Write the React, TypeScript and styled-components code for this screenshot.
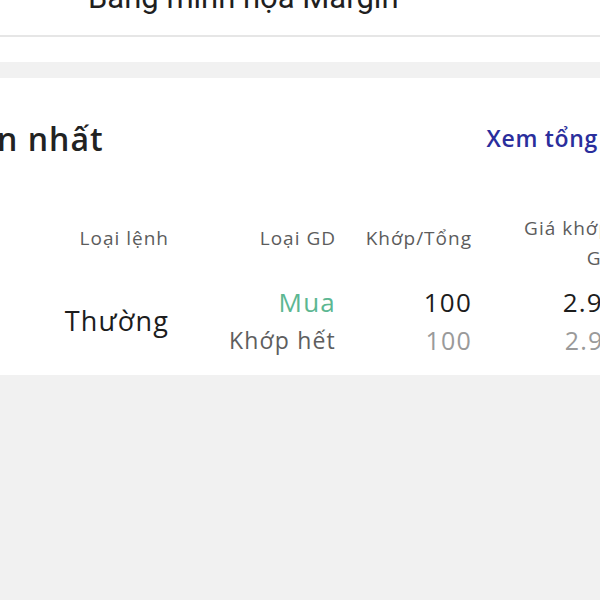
import React from 'react';
import styled, { createGlobalStyle } from 'styled-components';

const GlobalStyle = createGlobalStyle`
  *, *::before, *::after {
    box-sizing: border-box;
  }
  html, body {
    margin: 0;
    padding: 0;
    background: #f1f1f1;
    font-family: "Open Sans", "Noto Sans", sans-serif;
  }
  #root {
    width: 600px;
    height: 600px;
    overflow: hidden;
  }
`;

const Screen = styled.div`
  width: 600px;
  height: 600px;
  display: flex;
  flex-direction: column;
  background: #f1f1f1;
  overflow: hidden;
`;

const TopBar = styled.div`
  height: 37px;
  flex-shrink: 0;
  display: flex;
  align-items: flex-end;
  padding-left: 88px;
  background: #fff;
  border-bottom: 2px solid #e6e6e6;
`;

const TopTitle = styled.div`
  font-family: Roboto, "Noto Sans", sans-serif;
  font-size: 31px;
  line-height: 36px;
  color: #1f1f1f;
  margin-bottom: 19px;
  white-space: nowrap;
`;

const WhiteGap = styled.div`
  height: 25px;
  flex-shrink: 0;
  background: #fff;
`;

const GrayGap = styled.div`
  height: 16px;
  flex-shrink: 0;
  background: #f1f1f1;
`;

const Card = styled.section`
  height: 297px;
  flex-shrink: 0;
  background: #fff;
  overflow: hidden;
  display: flex;
  flex-direction: column;
`;

const CardHeader = styled.div`
  height: 120px;
  display: flex;
  align-items: center;
  justify-content: space-between;
  padding-top: 0;
`;

const CardTitle = styled.h2`
  margin: 0 0 0 -131px;
  font-size: 32px;
  font-weight: 600;
  letter-spacing: 1px;
  color: #222;
  white-space: nowrap;
`;

const SeeAll = styled.a`
  margin-right: 2px;
  font-size: 23px;
  font-weight: 600;
  letter-spacing: 0.7px;
  color: #2a2e9c;
  white-space: nowrap;
`;

const Table = styled.div`
  display: grid;
  grid-template-columns: 169px 167px 136px 147px;
  width: 619px;
`;

const HeadCell = styled.div<{ $wrapped?: boolean }>`
  height: 80px;
  display: flex;
  align-items: center;
  justify-content: flex-end;
  text-align: right;
  padding-top: ${(p) => (p.$wrapped ? '10px' : '0')};
  font-size: 19px;
  letter-spacing: 1px;
  line-height: 30px;
  color: #5c5c5c;
  white-space: nowrap;
`;

const BodyCell = styled.div`
  height: 97px;
  display: flex;
  flex-direction: column;
  align-items: flex-end;
  justify-content: center;
  padding-bottom: 12px;
  white-space: nowrap;
`;

const Line = styled.div<{ $tone?: 'dark' | 'green' | 'muted' | 'light'; $size?: number }>`
  font-size: ${(p) => p.$size ?? 23}px;
  letter-spacing: 1.2px;
  line-height: 38px;
  color: ${(p) =>
    p.$tone === 'green'
      ? '#5cb792'
      : p.$tone === 'muted'
      ? '#5e5e5e'
      : p.$tone === 'light'
      ? '#9a9a9a'
      : '#1c1c1c'};
`;

export default function App() {
  return (
    <>
      <GlobalStyle />
      <Screen>
        <TopBar>
          <TopTitle>Bảng minh họa Margin</TopTitle>
        </TopBar>
        <WhiteGap />
        <GrayGap />
        <Card>
          <CardHeader>
            <CardTitle>Lệnh gần nhất</CardTitle>
            <SeeAll>Xem tổng</SeeAll>
          </CardHeader>
          <Table>
            <HeadCell>Loại lệnh</HeadCell>
            <HeadCell>Loại GD</HeadCell>
            <HeadCell>Khớp/Tổng</HeadCell>
            <HeadCell $wrapped>
              Giá khớp/
              <br />
              Giá
            </HeadCell>

            <BodyCell>
              <Line $size={27}>Thường</Line>
            </BodyCell>
            <BodyCell>
              <Line $tone="green" $size={26}>Mua</Line>
              <Line $tone="muted">Khớp hết</Line>
            </BodyCell>
            <BodyCell>
              <Line $size={26}>100</Line>
              <Line $tone="light" $size={25}>100</Line>
            </BodyCell>
            <BodyCell>
              <Line $size={26}>2.95</Line>
              <Line $tone="light" $size={25}>2.95</Line>
            </BodyCell>
          </Table>
        </Card>
      </Screen>
    </>
  );
}
